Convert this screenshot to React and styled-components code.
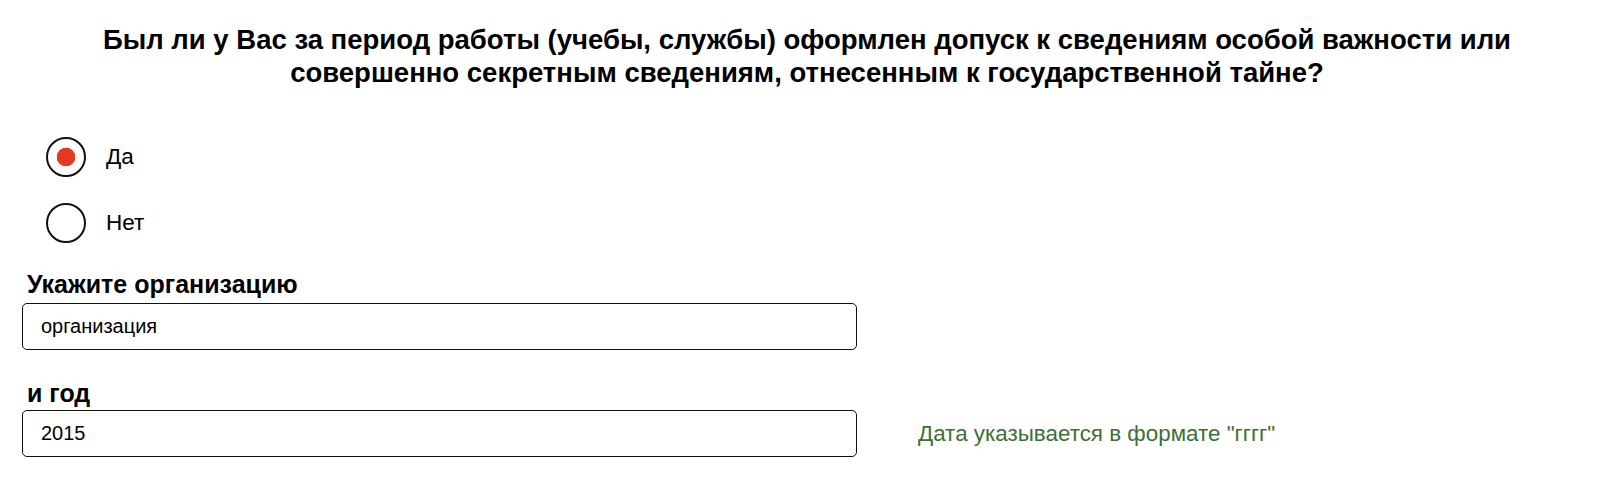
import React, { useState } from 'react'
import styled, { createGlobalStyle } from 'styled-components'

const GlobalStyle = createGlobalStyle`
  body {
    margin: 0;
    background: #fff;
    color: #000;
    font-family: "Liberation Sans", Arial, sans-serif;
  }
`

const Page = styled.div`
  padding: 23px 22px 20px;
`

const Question = styled.h2`
  max-width: 1440px;
  margin: 0 auto;
  font-size: 27.5px;
  line-height: 33px;
  font-weight: 700;
  text-align: center;
`

const RadioList = styled.div`
  display: flex;
  flex-direction: column;
  gap: 26px;
  margin-top: 48px;
  padding-left: 24px;
`

const RadioRow = styled.label`
  display: flex;
  align-items: center;
  gap: 20px;
  height: 40px;
  font-size: 22.5px;
  cursor: pointer;
`

const RadioInput = styled.input`
  appearance: none;
  box-sizing: border-box;
  width: 40px;
  height: 40px;
  margin: 0;
  border: 2px solid #111;
  border-radius: 50%;
  background: #fff;
  cursor: pointer;

  &:checked {
    background: radial-gradient(circle, #e53a22 0 9px, #fff 9.6px);
  }
`

const Field = styled.div`
  margin-top: ${p => p.$top}px;
`

const FieldLabel = styled.label`
  display: block;
  padding-left: 5px;
  font-size: 25px;
  line-height: 26px;
  font-weight: 700;
  margin-bottom: ${p => p.$gap}px;
`

const FieldRow = styled.div`
  display: flex;
  align-items: center;
  gap: 61px;
`

const TextInput = styled.input`
  box-sizing: border-box;
  width: 835px;
  height: 47px;
  padding: 0 18px;
  border: 1px solid #111;
  border-radius: 5px;
  font-family: inherit;
  font-size: 20px;
  color: #000;
  outline: none;
`

const Hint = styled.span`
  color: #3d7037;
  font-size: 22.4px;
`

const App = () => {
  const [answer, setAnswer] = useState('yes')
  const [org, setOrg] = useState('организация')
  const [year, setYear] = useState('2015')

  return (
    <Page>
      <GlobalStyle />
      <Question>
        Был ли у Вас за период работы (учебы, службы) оформлен допуск к сведениям особой важности или
        совершенно секретным сведениям, отнесенным к государственной тайне?
      </Question>
      <RadioList>
        <RadioRow>
          <RadioInput
            type="radio"
            name="access"
            checked={answer === 'yes'}
            onChange={() => setAnswer('yes')}
          />
          Да
        </RadioRow>
        <RadioRow>
          <RadioInput
            type="radio"
            name="access"
            checked={answer === 'no'}
            onChange={() => setAnswer('no')}
          />
          Нет
        </RadioRow>
      </RadioList>
      <Field $top={28}>
        <FieldLabel htmlFor="org" $gap={6}>Укажите организацию</FieldLabel>
        <TextInput id="org" value={org} onChange={e => setOrg(e.target.value)} />
      </Field>
      <Field $top={30}>
        <FieldLabel htmlFor="year" $gap={4}>и год</FieldLabel>
        <FieldRow>
          <TextInput id="year" value={year} onChange={e => setYear(e.target.value)} />
          <Hint>Дата указывается в формате "гггг"</Hint>
        </FieldRow>
      </Field>
    </Page>
  )
}

export default App
